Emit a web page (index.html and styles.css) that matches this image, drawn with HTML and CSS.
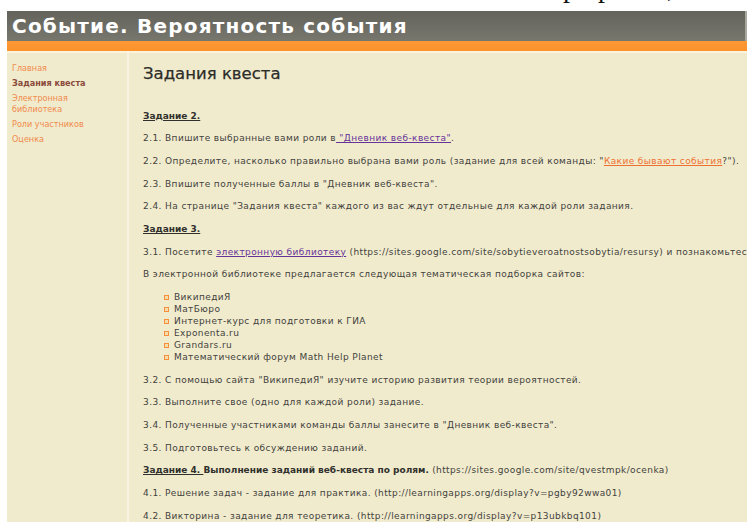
FILE: index.html
```html
<!DOCTYPE html>
<html lang="ru">
<head>
<meta charset="utf-8">
<title>Задания квеста</title>
<link rel="stylesheet" href="styles.css">
</head>
<body>
<div class="topline"><span class="topline-text">р<span class="gap-a"></span>р<span class="gap-b"></span>,</span></div>
<div class="site">
  <header class="site-header">
    <h1 class="site-title">Событие. Вероятность события</h1>
  </header>
  <div class="site-stripe"></div>
  <div class="layout">
    <nav class="sidebar">
      <a class="nav-link" href="#">Главная</a>
      <a class="nav-link current" href="#">Задания квеста</a>
      <a class="nav-link" href="#">Электронная<br>библиотека</a>
      <a class="nav-link" href="#">Роли участников</a>
      <a class="nav-link" href="#">Оценка</a>
    </nav>
    <main class="content">
      <h2 class="page-title">Задания квеста</h2>
      <p class="task-head"><b><u>Задание 2.</u></b></p>
      <p>2.1. Впишите выбранные вами роли в<a class="visited" href="#"> "Дневник веб-квеста"</a>.</p>
      <p>2.2. Определите, насколько правильно выбрана вами роль (задание для всей команды: "<a class="fresh" href="#">Какие бывают события</a>?").</p>
      <p>2.3. Впишите полученные баллы в "Дневник веб-квеста".</p>
      <p>2.4. На странице "Задания квеста" каждого из вас ждут отдельные для каждой роли задания.</p>
      <p class="task-head"><b><u>Задание 3.</u></b></p>
      <p>3.1. Посетите <a class="visited" href="#">электронную библиотеку</a> (https://sites.google.com/site/sobytieveroatnostsobytia/resursy) и познакомьтесь с материалами.</p>
      <p>В электронной библиотеке предлагается следующая тематическая подборка сайтов:</p>
      <ul class="sites">
        <li>ВикипедиЯ</li>
        <li>МатБюро</li>
        <li>Интернет-курс для подготовки к ГИА</li>
        <li>Exponenta.ru</li>
        <li>Grandars.ru</li>
        <li>Математический форум Math Help Planet</li>
      </ul>
      <p>3.2. С помощью сайта "ВикипедиЯ" изучите историю развития теории вероятностей.</p>
      <p>3.3. Выполните свое (одно для каждой роли) задание.</p>
      <p>3.4. Полученные участниками команды баллы занесите в "Дневник веб-квеста".</p>
      <p>3.5. Подготовьтесь к обсуждению заданий.</p>
      <p><b><u>Задание 4. </u>Выполнение заданий веб-квеста по ролям.</b> (https://sites.google.com/site/qvestmpk/ocenka)</p>
      <p>4.1. Решение задач - задание для практика. (http://learningapps.org/display?v=pgby92wwa01)</p>
      <p>4.2. Викторина - задание для теоретика. (http://learningapps.org/display?v=p13ubkbq101)</p>
    </main>
  </div>
</div>
</body>
</html>
```

FILE: styles.css
```css
html, body {
  margin: 0;
  padding: 0;
  background: #ffffff;
  overflow: hidden;
}

body {
  font-family: "DejaVu Sans", Verdana, sans-serif;
  color: #42423c;
}

/* clipped line of the document above the site frame */
.topline {
  height: 11px;
  overflow: hidden;
}

.topline-text {
  display: block;
  margin-top: -26px;
  padding-left: 563px;
  font-family: "Liberation Serif", serif;
  font-size: 28px;
  line-height: 28px;
  color: #111111;
  white-space: pre;
}

.gap-a {
  display: inline-block;
  width: 21px;
}

.gap-b {
  display: inline-block;
  width: 55px;
}

.site {
  margin-left: 7px;
}

.site-header {
  height: 30px;
  background: linear-gradient(#63635b, #77776e);
  display: flex;
  align-items: center;
  border-right: 2px solid #a9a99e;
}

.site-title {
  margin: 0 0 0 5px;
  font-size: 20px;
  font-weight: bold;
  letter-spacing: 1.2px;
  color: #ffffff;
  white-space: nowrap;
}

.site-stripe {
  height: 10px;
  background: linear-gradient(#ff9933, #fb922c);
  border-bottom: 2px solid #fbf3dc;
}

.layout {
  display: flex;
  background: #f1ebce;
  min-height: 480px;
}

.sidebar {
  width: 122px;
  flex: none;
  padding: 10px 0 0 5px;
  box-sizing: border-box;
  border-right: 2px solid #f8f3e2;
  display: flex;
  flex-direction: column;
  gap: 4px;
}

.nav-link {
  font-size: 8.1px;
  line-height: 11px;
  color: #f08a4c;
  text-decoration: none;
}

.nav-link.current {
  color: #8a4a3a;
  font-weight: bold;
}

.content {
  flex: 1;
  min-width: 0;
  padding: 8px 0 0 14px;
  white-space: nowrap;
  overflow: hidden;
  font-size: 9px;
  line-height: 12px;
  letter-spacing: 0.4px;
}

.page-title {
  margin: 0 0 22.5px;
  font-size: 16.5px;
  line-height: 26px;
  font-weight: normal;
  letter-spacing: 0;
  color: #2c2c28;
  -webkit-text-stroke: 0.25px #2c2c28;
}

.content p {
  margin: 0 0 10.7px;
}

.content b {
  color: #30302c;
  letter-spacing: 0;
}

a.visited {
  color: #663399;
}

a.fresh {
  color: #ee7030;
}

.sites {
  list-style: none;
  margin: 0 0 10.7px;
  padding: 0 0 0 21px;
}

.sites li {
  display: flex;
  align-items: center;
  gap: 5px;
  line-height: 12px;
}

/* hollow orange square bullets */
.sites li::before {
  content: "";
  width: 3px;
  height: 3px;
  border: 1px solid #f59038;
  background: #f7dcb0;
  flex: none;
}
```
